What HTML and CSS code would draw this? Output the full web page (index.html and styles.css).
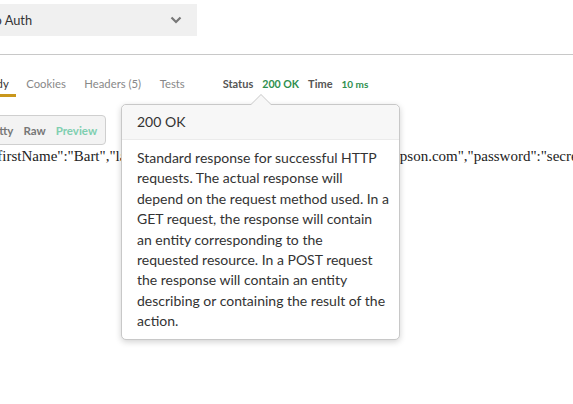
FILE: index.html
```html
<!DOCTYPE html>
<html>
<head>
<meta charset="utf-8">
<link rel="stylesheet" href="styles.css">
</head>
<body>
<div class="page">
  <div class="auth-row">
    <div class="select">
      <span class="select-text">No Auth</span>
      <svg class="chevron" width="12" height="8" viewBox="0 0 12 8"><path d="M1.5 1.5 L6 6 L10.5 1.5" fill="none" stroke="#777" stroke-width="2.2"/></svg>
    </div>
  </div>
  <div class="divider"></div>
  <div class="tabs-row">
    <div class="tabs">
      <span class="tab active">Body</span>
      <span class="tab">Cookies</span>
      <span class="tab">Headers (5)</span>
      <span class="tab">Tests</span>
    </div>
    <div class="meta">
      <span class="meta-label">Status</span>
      <span class="meta-value">200 OK</span>
      <span class="meta-label">Time</span>
      <span class="meta-value small">10 ms</span>
    </div>
  </div>
  <div class="view-row">
    <div class="btn-group">
      <span class="btn">Pretty</span>
      <span class="btn">Raw</span>
      <span class="btn green">Preview</span>
    </div>
  </div>
  <div class="json">{"firstName":"Bart","lastName":"Simpson","email":"bsimpson@simpson.com","password":"secret"}</div>
</div>
<div class="popover">
  <div class="arrow"></div>
  <div class="popover-title">200 OK</div>
  <div class="popover-content">Standard response for successful HTTP<br>requests. The actual response will<br>depend on the request method used. In a<br>GET request, the response will contain<br>an entity corresponding to the<br>requested resource. In a POST request<br>the response will contain an entity<br>describing or containing the result of the<br>action.</div>
</div>
</body>
</html>
```
FILE: styles.css
```css
html, body {
  margin: 0;
  padding: 0;
  background: #fff;
  overflow: hidden;
  width: 573px;
  height: 404px;
}
body {
  font-family: Lato, "Open Sans", sans-serif;
  color: #333;
  position: relative;
}
.page {
  display: flex;
  flex-direction: column;
}
.auth-row {
  padding-top: 4px;
  height: 32px;
}
.select {
  width: 197px;
  height: 32px;
  background: #f0f0f0;
  display: flex;
  align-items: center;
  justify-content: space-between;
  box-sizing: border-box;
  padding-right: 15px;
  overflow: hidden;
}
.select-text {
  font-size: 12.8px;
  margin-left: -15px;
  color: #333;
}
.chevron {
  display: block;
}
.divider {
  margin-top: 18px;
  border-top: 1px solid #c8c8c8;
}
.tabs-row {
  display: flex;
  align-items: flex-start;
  margin-top: 21px;
  height: 21px;
}
.tabs {
  display: flex;
  gap: 18.5px;
  margin-left: -17px;
  font-size: 11.3px;
}
.tab {
  color: #888;
  height: 18px;
  line-height: 16px;
}
.tab.active {
  color: #333;
  border-bottom: 3px solid #c9971c;
  padding-right: 7px;
  margin-right: -8px;
}
.meta {
  display: flex;
  align-items: baseline;
  gap: 9px;
  margin-left: 38px;
  font-size: 11px;
  font-weight: bold;
  line-height: 16px;
}
.meta-label {
  color: #555;
}
.meta-value {
  color: #2f8f4e;
  font-size: 10.6px;
}
.meta-value.small {
  font-size: 10px;
}
.view-row {
  margin-top: 18px;
}
.btn-group {
  display: inline-flex;
  gap: 10px;
  align-items: center;
  height: 30px;
  box-sizing: border-box;
  border: 1px solid #cfcfcf;
  border-radius: 4px;
  background: #f3f3f3;
  margin-left: -27px;
  padding: 0 8px 0 8px;
  font-size: 11.5px;
  font-weight: bold;
  color: #777;
}
.btn.green {
  color: #7fcfb0;
}
.json {
  font-family: "Liberation Serif", serif;
  font-size: 15px;
  color: #222;
  margin-top: 3px;
  margin-left: -16px;
  white-space: nowrap;
}
.popover {
  position: absolute;
  left: 121px;
  top: 104px;
  width: 279px;
  box-sizing: border-box;
  background: #fff;
  border: 1px solid #c8c8c8;
  border-radius: 5px;
  box-shadow: 0 2px 6px rgba(0,0,0,0.18);
}
.arrow {
  position: absolute;
  top: -11px;
  left: 128px;
  width: 0;
  height: 0;
  border-left: 11px solid transparent;
  border-right: 11px solid transparent;
  border-bottom: 11px solid #c8c8c8;
}
.arrow::after {
  content: "";
  position: absolute;
  left: -10px;
  top: 1px;
  border-left: 10px solid transparent;
  border-right: 10px solid transparent;
  border-bottom: 10px solid #f7f7f7;
}
.popover-title {
  background: #f7f7f7;
  border-bottom: 1px solid #ebebeb;
  border-radius: 5px 5px 0 0;
  padding: 8px 15px;
  font-size: 14px;
  line-height: 18px;
  color: #333;
}
.popover-content {
  padding: 8px 10px 7px 15px;
  font-size: 14px;
  line-height: 20.4px;
  color: #333;
  white-space: nowrap;
}
```
